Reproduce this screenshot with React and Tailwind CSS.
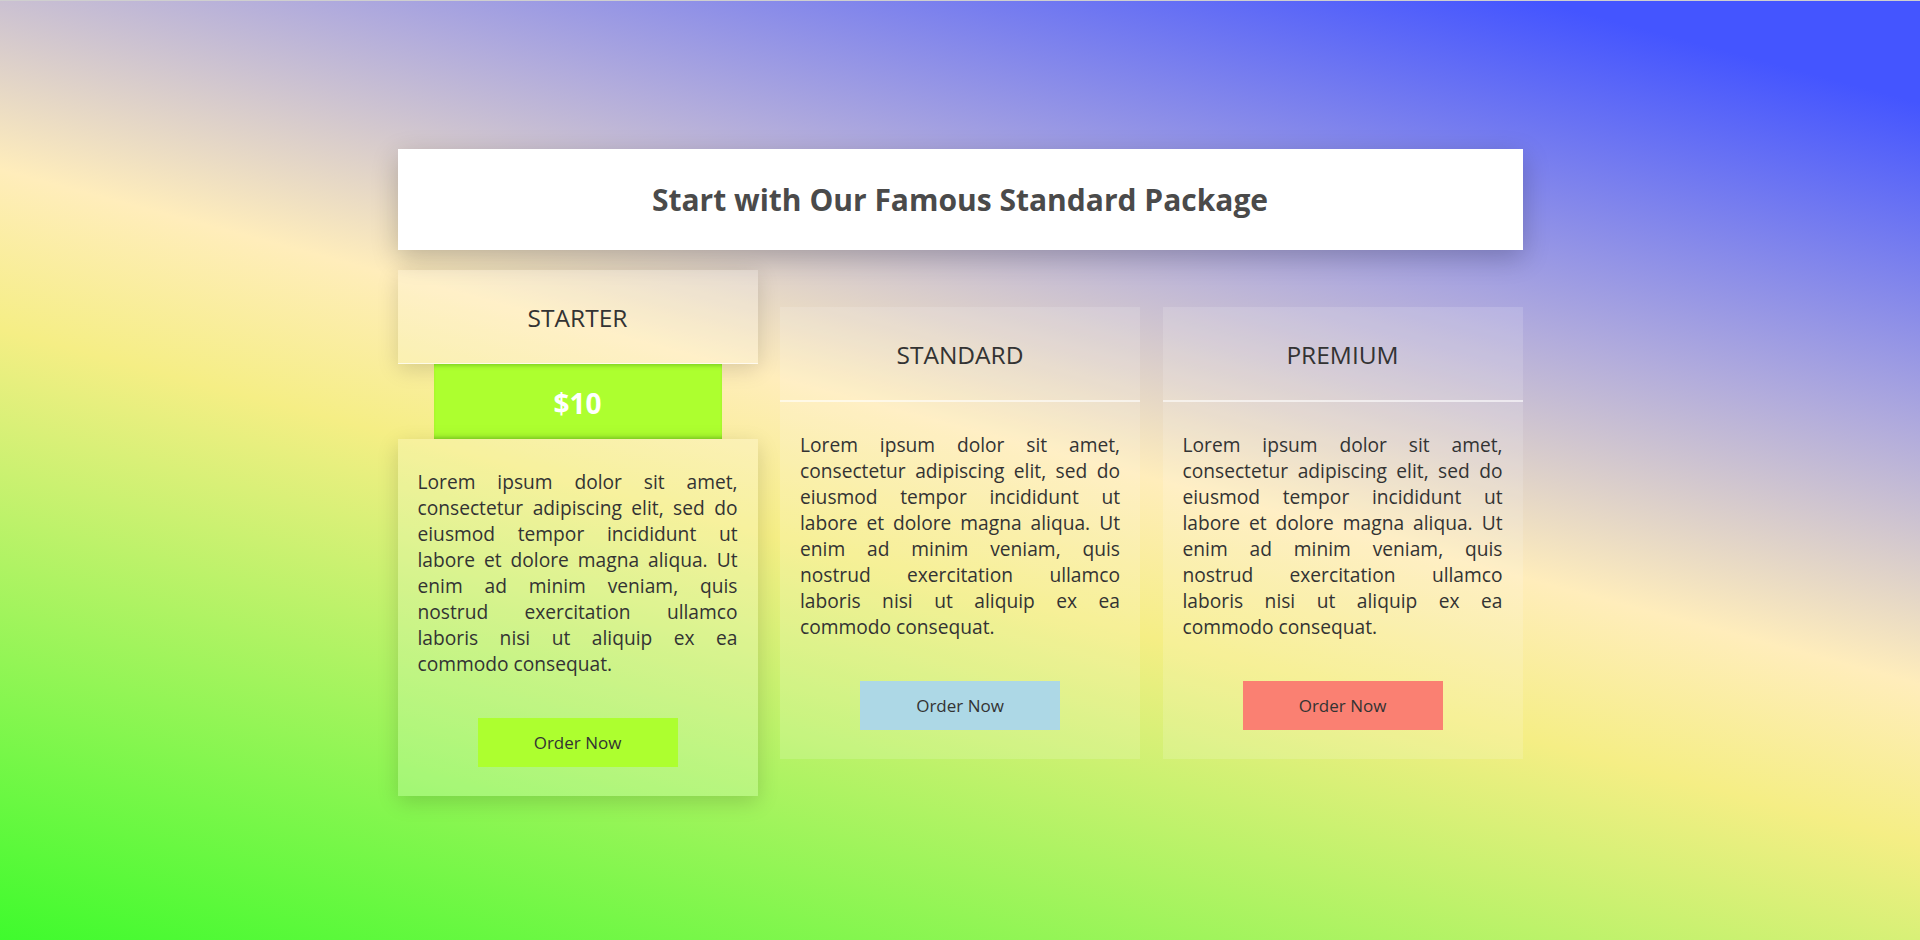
const plans = [
  { name: "STANDARD", btn: "bg-[#add8e6]" },
  { name: "PREMIUM", btn: "bg-[#fa8072]" },
];

const lorem =
  "Lorem ipsum dolor sit amet, consectetur adipiscing elit, sed do eiusmod tempor incididunt ut labore et dolore magna aliqua. Ut enim ad minim veniam, quis nostrud exercitation ullamco laboris nisi ut aliquip ex ea commodo consequat.";

const CardBody = ({ btn, className = "" }) => (
  <div className={`px-5 pt-[30px] pb-[29px] flex flex-col items-center ${className}`}>
    <p className="text-[19.2px] leading-[26px] text-justify text-[#333]">{lorem}</p>
    <button
      type="button"
      className={`mt-[41px] w-[200px] h-[49px] text-[17px] text-[#333] ${btn}`}
    >
      Order Now
    </button>
  </div>
);

export default function App() {
  return (
    <div className="min-h-screen h-[940px] border-t border-[#cfcfcf] font-['Open_Sans',sans-serif] bg-[linear-gradient(15deg,#3ffb2d_0%,#f5ee85_42%,#ffedbb_53%,#b2acdc_70%,#4455ff_93%)]">
      <div className="w-[1125px] mx-auto pt-[148px]">
        <div className="h-[101px] bg-white flex items-center justify-center shadow-[0_8px_25px_rgba(0,0,0,0.22)]">
          <h1 className="text-[30px] font-bold text-[#4a4a4a]">
            Start with Our Famous Standard Package
          </h1>
        </div>

        <div className="mt-5 flex items-center justify-between">
          {/* starter */}
          <div className="w-[360px] flex flex-col">
            <div className="h-[94px] pt-[3px] flex items-center justify-center bg-white/20 border-b border-white/70 shadow-[0_5px_20px_rgba(0,0,0,0.15)]">
              <h3 className="text-[24.5px] text-[#333]">STARTER</h3>
            </div>
            <div className="mx-auto w-[288px] h-[75px] pt-[2px] flex items-center justify-center bg-[#adff2f] shadow-[inset_0_5px_5px_-4px_rgba(0,80,0,0.35),inset_0_-5px_5px_-4px_rgba(0,80,0,0.35)]">
              <span className="text-[28px] font-bold text-white">$10</span>
            </div>
            <CardBody
              btn="bg-[#adff2f]"
              className="bg-white/20 shadow-[0_6px_20px_rgba(0,0,0,0.15)]"
            />
          </div>

          {plans.map((plan) => (
            <div key={plan.name} className="w-[360px] flex flex-col bg-white/15">
              <div className="h-[95px] pt-[3px] flex items-center justify-center border-b-2 border-white/60">
                <h3 className="text-[24.5px] text-[#333]">{plan.name}</h3>
              </div>
              <CardBody btn={plan.btn} />
            </div>
          ))}
        </div>
      </div>
    </div>
  );
}
